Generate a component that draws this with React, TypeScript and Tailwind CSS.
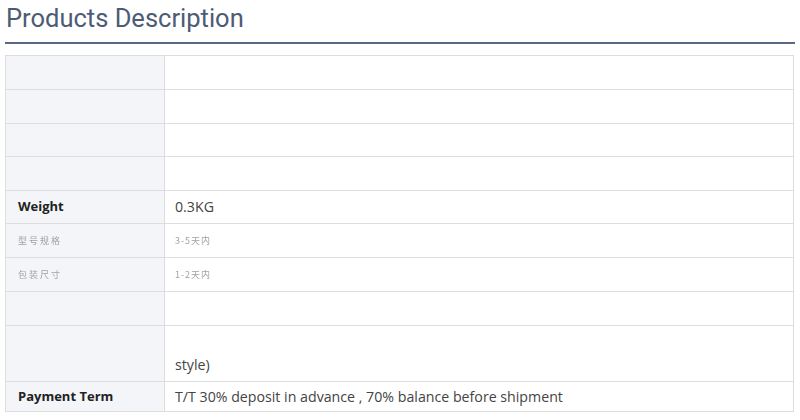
const rows: { label: string; value: string; kind?: 'bold' | 'faint' | 'tall'; h: string }[] = [
  { label: '', value: '', h: 'h-[34px]' },
  { label: '', value: '', h: 'h-[34px]' },
  { label: '', value: '', h: 'h-[33px]' },
  { label: '', value: '', h: 'h-[34px]' },
  { label: 'Weight', value: '0.3KG', kind: 'bold', h: 'h-[33px]' },
  { label: '型号规格', value: '3-5天内', kind: 'faint', h: 'h-[34px]' },
  { label: '包装尺寸', value: '1-2天内', kind: 'faint', h: 'h-[34px]' },
  { label: '', value: '', h: 'h-[34px]' },
  { label: '', value: 'style)', kind: 'tall', h: 'h-[56px]' },
  { label: 'Payment Term', value: 'T/T 30% deposit in advance , 70% balance before shipment', kind: 'bold', h: 'h-[30px]' },
];

export default function App() {
  return (
    <div className="w-[800px] h-[420px] bg-white overflow-hidden font-['Open_Sans',sans-serif]">
      <div className="pl-[5px] pr-[5px]">
        <h2 className="h-[42px] pt-[1px] pl-[1px] text-[25.5px] leading-[34px] text-[#4d5b75] font-['Roboto',sans-serif]">
          Products Description
        </h2>
        <div className="h-[2px] bg-[#5a6985]" />
        <div className="mt-[11px] mr-[1px] border-t border-l border-r border-[#dddddd]">
          {rows.map((r, i) => (
            <div key={i} className={`flex border-b border-[#dddddd] ${r.h}`}>
              <div className="w-[159px] shrink-0 bg-[#f4f5f9] border-r border-[#dddddd] pl-[12px] flex items-center">
                {r.kind === 'faint' ? (
                  <span className="text-[9px] tracking-[2px] text-[#a0a2a8] blur-[0.4px] font-['Noto_Sans_CJK_SC',sans-serif]">{r.label}</span>
                ) : (
                  <span className="text-[13px] font-bold text-[#222222]">{r.label}</span>
                )}
              </div>
              <div
                className={`flex-1 pl-[10px] flex ${r.kind === 'tall' ? 'items-end pb-[6px]' : 'items-center'}`}
              >
                {r.kind === 'faint' ? (
                  <span className="text-[9px] tracking-[1px] text-[#a0a2a8] blur-[0.4px] font-['Noto_Sans_CJK_SC',sans-serif]">{r.value}</span>
                ) : (
                  <span className="text-[14.2px] leading-[20px] text-[#444444]">{r.value}</span>
                )}
              </div>
            </div>
          ))}
        </div>
      </div>
    </div>
  );
}
